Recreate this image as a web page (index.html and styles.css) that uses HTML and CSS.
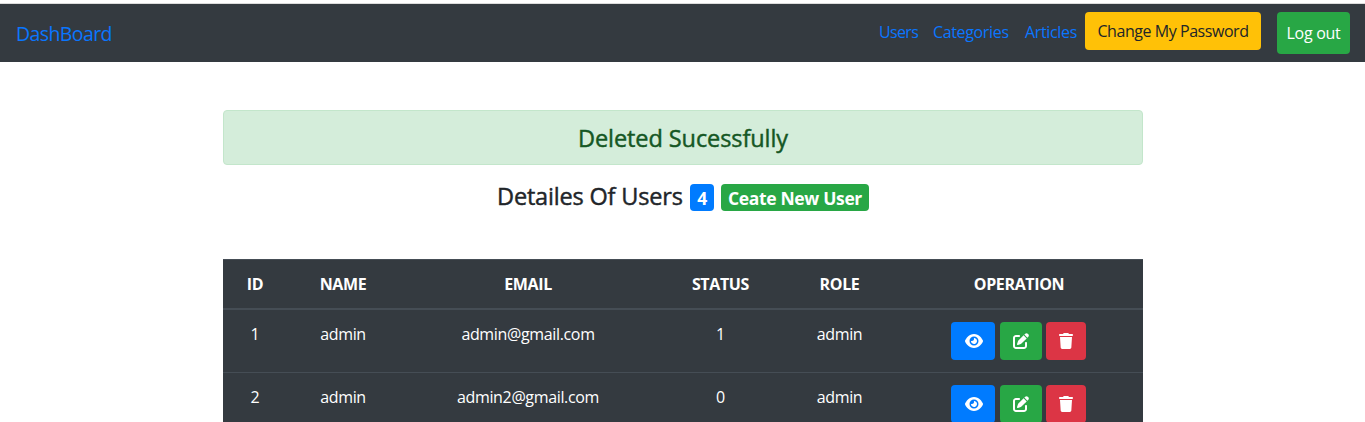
FILE: index.html
```html
<!DOCTYPE html>
<html lang="en">
<head>
<meta charset="utf-8">
<title>Users</title>
<link rel="stylesheet" href="styles.css">
</head>
<body>
<svg class="sprite" aria-hidden="true">
  <symbol id="eye" viewBox="0 0 576 512"><path d="M288 32c-80.8 0-145.5 36.8-192.6 80.6C48.6 156 17.3 208 2.5 243.7c-3.3 7.9-3.3 16.7 0 24.6C17.3 304 48.6 356 95.4 399.4C142.5 443.2 207.2 480 288 480s145.5-36.8 192.6-80.6c46.8-43.5 78.1-95.4 93-131.1c3.3-7.9 3.3-16.7 0-24.6c-14.9-35.7-46.2-87.7-93-131.1C433.5 68.8 368.8 32 288 32zM144 256a144 144 0 1 1 288 0 144 144 0 1 1 -288 0zm144-64c0 35.3-28.7 64-64 64c-7.1 0-13.9-1.2-20.3-3.3c-5.5-1.8-11.9 1.6-11.7 7.4c.3 6.9 1.3 13.8 3.2 20.7c13.7 51.2 66.4 81.6 117.6 67.9s81.6-66.4 67.9-117.6c-11.1-41.5-47.8-69.4-88.6-71.1c-5.8-.2-9.2 6.1-7.4 11.7c2.1 6.4 3.3 13.2 3.3 20.3z"/></symbol>
  <symbol id="edit" viewBox="0 0 512 512"><path d="M471.6 21.7c-21.9-21.9-57.3-21.9-79.2 0L362.3 51.7l97.9 97.9 30.1-30.1c21.9-21.9 21.9-57.3 0-79.2L471.6 21.7zm-299.2 220c-6.1 6.1-10.8 13.6-13.5 21.9l-29.6 88.8c-2.9 8.6-.6 18.1 5.8 24.6s15.9 8.7 24.6 5.8l88.8-29.6c8.2-2.7 15.7-7.4 21.9-13.5L437.7 172.3 339.7 74.3 172.4 241.7zM96 64C43 64 0 107 0 160V416c0 53 43 96 96 96H352c53 0 96-43 96-96V320c0-17.7-14.3-32-32-32s-32 14.3-32 32v96c0 17.7-14.3 32-32 32H96c-17.7 0-32-14.3-32-32V160c0-17.7 14.3-32 32-32h96c17.7 0 32-14.3 32-32s-14.3-32-32-32H96z"/></symbol>
  <symbol id="trash" viewBox="0 0 448 512"><path d="M135.2 17.7L128 32H32C14.3 32 0 46.3 0 64S14.3 96 32 96H416c17.7 0 32-14.3 32-32s-14.3-32-32-32H320l-7.2-14.3C307.4 6.8 296.3 0 284.2 0H163.8c-12.1 0-23.2 6.8-28.6 17.7zM416 128H32L53.2 467c1.6 25.3 22.6 45 47.9 45H346.9c25.3 0 46.3-19.7 47.9-45L416 128z"/></symbol>
</svg>
<nav class="navbar">
  <a class="brand">DashBoard</a>
  <div class="links">
    <a class="nav-link users">Users</a>
    <a class="nav-link categories">Categories</a>
    <a class="nav-link articles">Articles</a>
    <a class="nav-btn password">Change My Password</a>
    <a class="nav-btn logout">Log out</a>
  </div>
</nav>
<main class="container">
  <div class="alert">Deleted Sucessfully</div>
  <h4 class="heading"><span class="title">Detailes Of Users</span><span class="badge count">4</span><span class="badge create">Ceate New User</span></h4>
  <div class="table">
    <div class="row head"><span>ID</span><span>NAME</span><span>EMAIL</span><span>STATUS</span><span>ROLE</span><span>OPERATION</span></div>
    <div class="row">
      <span>1</span><span>admin</span><span>admin@gmail.com</span><span>1</span><span>admin</span>
      <div class="ops">
        <a class="op view"><svg><use href="#eye"/></svg></a>
        <a class="op edit"><svg><use href="#edit"/></svg></a>
        <a class="op delete"><svg><use href="#trash"/></svg></a>
      </div>
    </div>
    <div class="row ruled">
      <span>2</span><span>admin</span><span>admin2@gmail.com</span><span>0</span><span>admin</span>
      <div class="ops">
        <a class="op view"><svg><use href="#eye"/></svg></a>
        <a class="op edit"><svg><use href="#edit"/></svg></a>
        <a class="op delete"><svg><use href="#trash"/></svg></a>
      </div>
    </div>
  </div>
</main>
</body>
</html>
```
FILE: styles.css
```css
* { box-sizing: border-box; }
body {
  margin: 0;
  height: 422px;
  overflow: hidden;
  padding-top: 3px;
  background: #fff;
  color: #212529;
  font: 16px/24px "Open Sans", "Noto Sans", sans-serif;
  white-space: nowrap;
}
.sprite { display: none; }
.navbar {
  display: flex;
  justify-content: space-between;
  height: 59px;
  padding: 8px 15px 8px 16px;
  border-top: 1px solid #dcdcdc;
  background: #343a40;
  color: #0a76ff;
}
.brand { font-size: 19.5px; line-height: 44px; letter-spacing: -0.6px; }
.links { display: flex; align-items: flex-start; }
.nav-link { padding: 8px 0; letter-spacing: -0.35px; }
.users { width: 38px; margin-right: 16px; letter-spacing: -0.65px; }
.categories { width: 76px; margin-right: 16px; }
.articles { width: 52px; margin-right: 8px; }
.nav-btn { border-radius: 4px; text-align: center; letter-spacing: -0.3px; }
.password { width: 176px; height: 38px; margin-right: 16px; line-height: 38px; background: #ffc107; color: #212529; letter-spacing: -0.45px; }
.logout { width: 73px; height: 42px; line-height: 43px; background: #28a745; color: #fff; }
.container { width: 920px; margin: 48px auto 0 223px; }
.alert {
  height: 55px;
  border: 1px solid #c3e6cb;
  border-radius: 4px;
  background: #d4edda;
  color: #155724;
  font-size: 23.5px;
  font-weight: 500;
  line-height: 55px;
  text-align: center;
  letter-spacing: -0.08px;
  -webkit-text-stroke: 0.45px currentColor;
}
.heading {
  display: flex;
  height: 27px;
  margin: 19px 0 48px 274px;
  font-size: 23.5px;
  font-weight: 500;
  line-height: 27px;
}
.title { width: 193px; letter-spacing: -0.17px; line-height: 25px; -webkit-text-stroke: 0.45px currentColor; }
.badge { border-radius: 4px; color: #fff; font-size: 17.5px; font-weight: 700; line-height: 28px; text-align: center; letter-spacing: -0.35px; }
.count { width: 24px; margin-right: 7px; background: #007bff; }
.create { width: 148px; background: #28a745; }
.table { background: #343a40; color: #fff; }
.row {
  display: grid;
  grid-template-columns: 64px 112px 258px 127px 111px 248px;
  padding: 12px 0;
  text-align: center;
  letter-spacing: -0.35px;
}
.head { border-top: 1px solid #454d55; border-bottom: 2px solid #454d55; font-weight: 700; line-height: 25px; height: 51px; }
.ruled { border-top: 1px solid #454d55; }
.ops { display: flex; padding-left: 56px; }
.op { display: flex; align-items: center; justify-content: center; height: 38px; border-radius: 4px; }
.op svg { width: 18px; height: 16px; fill: #fff; }
.view { width: 44px; margin-right: 5px; padding-left: 1px; background: #007bff; }
.edit { width: 42px; margin-right: 4px; background: #28a745; }
.delete { width: 40px; background: #dc3545; }
```
